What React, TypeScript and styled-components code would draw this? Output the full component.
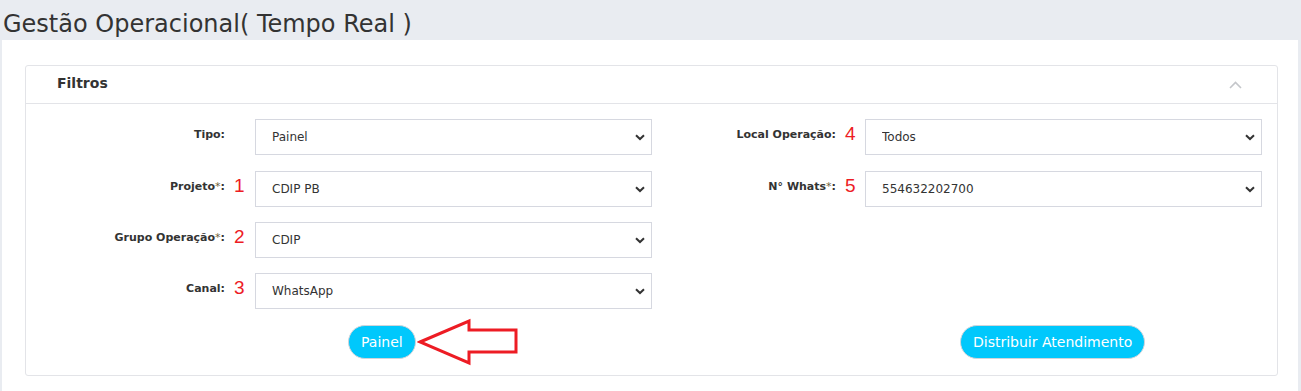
import React from "react";
import styled, { createGlobalStyle } from "styled-components";

const GlobalStyle = createGlobalStyle`
  html, body { margin: 0; padding: 0; }
  body {
    background: #e9ecf1;
    font-family: "DejaVu Sans", Verdana, sans-serif;
    color: #333;
  }
`;

const Page = styled.div`
  display: flex;
  flex-direction: column;
  min-height: 391px;
`;

const Title = styled.h1`
  margin: 0;
  padding: 10px 0 0 3px;
  height: 40px;
  box-sizing: border-box;
  font-size: 24px;
  font-weight: normal;
  line-height: 28px;
  color: #333;
  white-space: nowrap;
`;

const Content = styled.div`
  flex: 1;
  background: #fff;
  margin: 0 3px 0 2px;
  padding: 25px 20px 0 23px;
`;

const Card = styled.section`
  border: 1px solid #e3e4e8;
  border-radius: 3px;
  background: #fff;
`;

const CardHeader = styled.div`
  height: 37px;
  display: flex;
  align-items: center;
  justify-content: space-between;
  padding: 0 35px 0 31px;
  border-bottom: 1px solid #e3e4e8;
`;

const CardTitle = styled.h3`
  margin: 0;
  font-size: 14px;
  font-weight: bold;
  color: #333;
  margin-top: -3px;
`;

const Body = styled.div`
  display: grid;
  grid-template-columns: 641px 1fr;
  padding: 15px 0 16px 0;
`;

const Column = styled.div`
  display: flex;
  flex-direction: column;
  gap: 15px;
  padding-right: 15px;
`;

const Row = styled.div`
  display: flex;
  align-items: flex-start;
  height: 36px;
  &:first-child {
    margin-bottom: 1px;
  }
`;

const Label = styled.label`
  flex: 1;
  text-align: right;
  font-size: 11px;
  font-weight: bold;
  color: #333;
  padding-top: 9px;
  white-space: nowrap;
`;

const Star = styled.span`
  color: #6e5f3c;
  font-weight: normal;
`;

const NumSlot = styled.span<{ $w: number }>`
  width: ${(p) => p.$w}px;
  box-sizing: border-box;
  padding-left: 9px;
  font-family: "Liberation Sans", Arial, sans-serif;
  font-size: 19px;
  line-height: 20px;
  color: #ed1c24;
  padding-top: 5px;
`;

const SelectWrap = styled.div`
  position: relative;
  width: 397px;
  height: 36px;
`;

const Select = styled.select`
  appearance: none;
  -webkit-appearance: none;
  width: 100%;
  height: 100%;
  box-sizing: border-box;
  border: 1px solid #d6d8e0;
  border-radius: 0;
  background: #fff;
  padding: 0 30px 0 16px;
  font-family: "DejaVu Sans", Verdana, sans-serif;
  font-size: 12px;
  color: #333;
  outline: none;
`;

const Chevron = styled.svg`
  position: absolute;
  right: 7px;
  top: 15px;
  pointer-events: none;
`;

const ButtonRow = styled.div<{ $pad: number }>`
  display: flex;
  align-items: center;
  gap: 1px;
  padding-left: ${(p) => p.$pad}px;
  margin-top: 1px;
  height: 34px;
`;

const PillButton = styled.button`
  height: 34px;
  padding: 0 12px;
  border: 1px solid #d0d4da;
  border-radius: 17px;
  background: #00c8fc;
  color: #fff;
  font-family: "DejaVu Sans", Verdana, sans-serif;
  font-size: 14px;
  cursor: pointer;
  white-space: nowrap;
`;

const Arrow = styled.svg`
  flex: none;
  margin: -7px 0;
`;

const Field = ({
  label,
  star,
  num,
  value,
  slot,
}: {
  label: string;
  star?: boolean;
  num?: string;
  value: string;
  slot: number;
}) => (
  <Row>
    <Label>
      {label}
      {star && <Star>*</Star>}:
    </Label>
    <NumSlot $w={slot}>{num}</NumSlot>
    <SelectWrap>
      <Select defaultValue={value}>
        <option value={value}>{value}</option>
      </Select>
      <Chevron width="10" height="7" viewBox="0 0 10 7">
        <path d="M1 1.2 L5 5 L9 1.2" fill="none" stroke="#333" strokeWidth="2" />
      </Chevron>
    </SelectWrap>
  </Row>
);

export default function App() {
  return (
    <Page>
      <GlobalStyle />
      <Title>Gestão Operacional( Tempo Real )</Title>
      <Content>
        <Card>
          <CardHeader>
            <CardTitle>Filtros</CardTitle>
            <svg width="13" height="8" viewBox="0 0 13 8">
              <path d="M1 7 L6.5 1.5 L12 7" fill="none" stroke="#c4c6ca" strokeWidth="1.6" />
            </svg>
          </CardHeader>
          <Body>
            <Column>
              <Field label="Tipo" value="Painel" slot={30} />
              <Field label="Projeto" star num="1" value="CDIP PB" slot={30} />
              <Field label="Grupo Operação" star num="2" value="CDIP" slot={30} />
              <Field label="Canal" num="3" value="WhatsApp" slot={30} />
              <ButtonRow $pad={322}>
                <PillButton>Painel</PillButton>
                <Arrow width="104" height="48" viewBox="0 0 104 48">
                  <path
                    d="M3 24 L52 3 L52 12 L99 12 L99 34 L52 34 L52 45 Z"
                    fill="none"
                    stroke="#ed1c24"
                    strokeWidth="3"
                    strokeLinejoin="miter"
                    strokeMiterlimit="10"
                  />
                </Arrow>
              </ButtonRow>
            </Column>
            <Column>
              <Field label="Local Operação" num="4" value="Todos" slot={29} />
              <Field label="N° Whats" star num="5" value="554632202700" slot={29} />
              <Row />
              <Row />
              <ButtonRow $pad={293}>
                <PillButton>Distribuir Atendimento</PillButton>
              </ButtonRow>
            </Column>
          </Body>
        </Card>
      </Content>
    </Page>
  );
}
